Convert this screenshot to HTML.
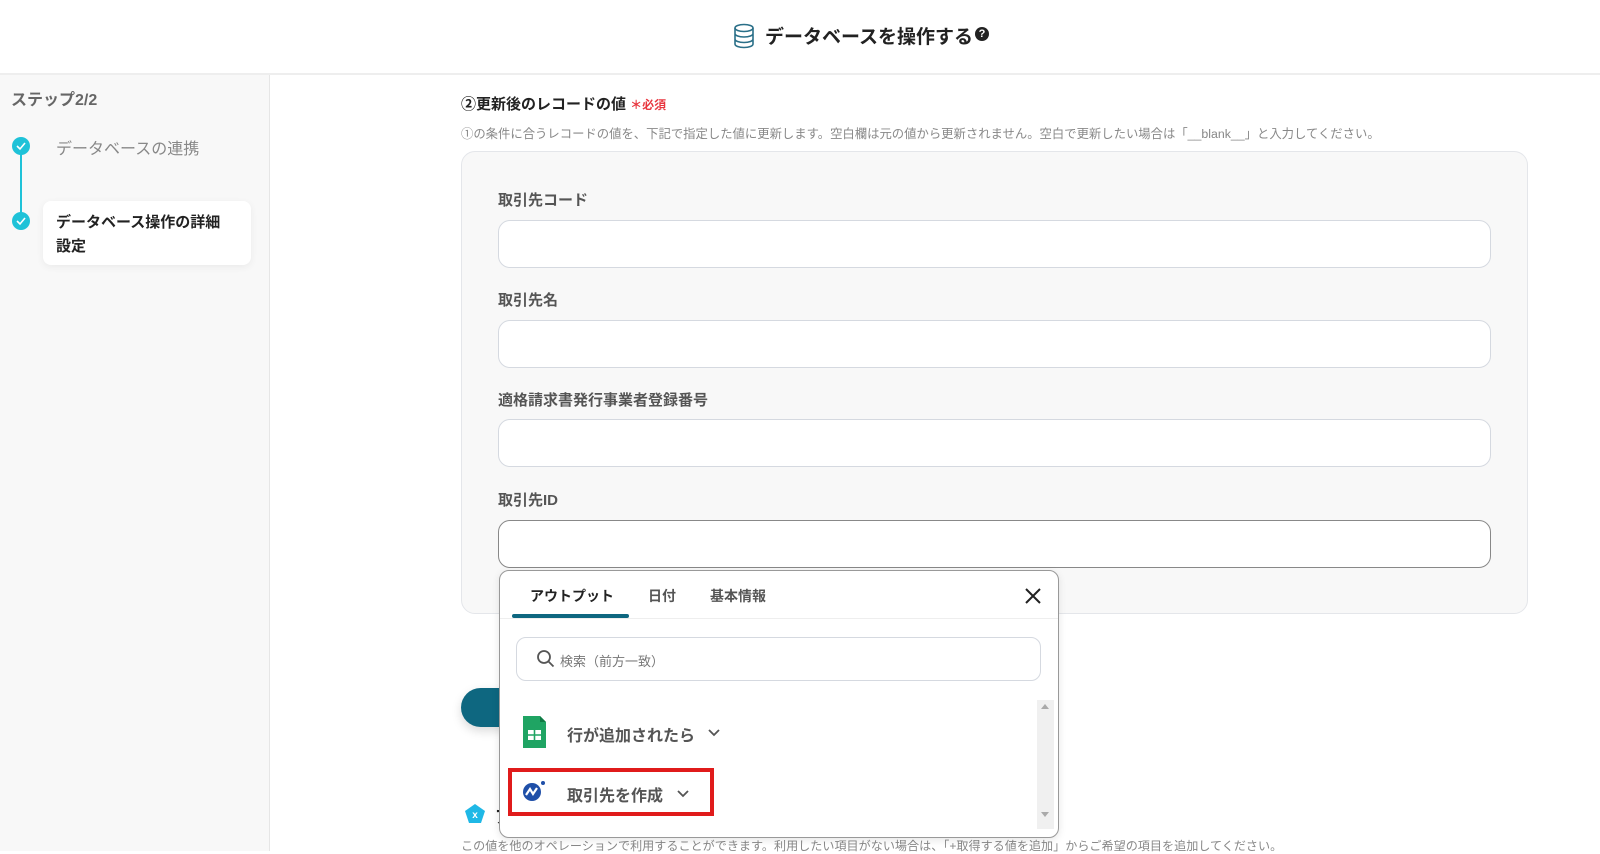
<!DOCTYPE html>
<html><head><meta charset="utf-8"><style>
*{box-sizing:border-box;margin:0;padding:0}
body{width:1600px;height:851px;overflow:hidden;background:#fff;font-family:"Liberation Sans","Noto Sans CJK JP",sans-serif;color:#333;position:relative}
.a{position:absolute}
.hdr{left:0;top:0;width:1600px;height:75px;border-bottom:2px solid #eee;background:#fff}
.side{left:0;top:75px;width:270px;height:776px;background:#f8f8f8;border-right:1px solid #e6e6e6}
.circ{width:18px;height:18px;border-radius:50%;background:#1fc2d8}
.inp{left:498px;width:993px;height:48px;border:1px solid #d5d9e0;border-radius:12px;background:#fff}
.lab{left:498px;font-size:15px;font-weight:bold;color:#555}
</style></head><body>
<div class="a hdr"></div>
<svg class="a" style="left:733px;top:23px" width="22" height="26" viewBox="0 0 22 26" fill="none" stroke="#2a6f88" stroke-width="1.6"><ellipse cx="11" cy="5" rx="9" ry="3.5"/><path d="M2 5v16c0 2 4 3.5 9 3.5s9-1.5 9-3.5V5M2 10.5c0 2 4 3.5 9 3.5s9-1.5 9-3.5M2 16c0 2 4 3.5 9 3.5s9-1.5 9-3.5"/></svg>
<div class="a" style="left:765px;top:22px;font-size:19px;font-weight:bold;color:#222">データベースを操作する</div>
<div class="a" style="left:975px;top:27px;width:14px;height:14px;border-radius:50%;background:#222;color:#fff;font-size:11px;font-weight:bold;text-align:center;line-height:14px">?</div>
<div class="a side"></div>
<div class="a" style="left:11px;top:86px;font-size:16px;font-weight:bold;color:#666">ステップ2/2</div>
<div class="a" style="left:20px;top:148px;width:2px;height:72px;background:#1fc2d8"></div>
<div class="a circ" style="left:12px;top:137px"></div>
<div class="a circ" style="left:12px;top:212px"></div>
<svg class="a" style="left:12px;top:137px" width="18" height="18"><path d="M5 9l3 3 5-6" stroke="#fff" stroke-width="1.6" fill="none"/></svg>
<svg class="a" style="left:12px;top:212px" width="18" height="18"><path d="M5 9l3 3 5-6" stroke="#fff" stroke-width="1.6" fill="none"/></svg>
<div class="a" style="left:56px;top:135px;font-size:16px;color:#888">データベースの連携</div>
<div class="a" style="left:43px;top:201px;width:208px;height:64px;background:#fff;border-radius:8px;box-shadow:0 2px 8px rgba(0,0,0,.06)"></div>
<div class="a" style="left:56px;top:211px;font-size:15px;font-weight:bold;color:#222;line-height:24px;width:190px">データベース操作の詳細<br>設定</div>
<div class="a" style="left:461px;top:93px;font-size:15px;font-weight:bold;color:#222">②更新後のレコードの値 <span style="color:#e8363f;font-size:12px">＊必須</span></div>
<div class="a" style="left:461px;top:124px;font-size:12.35px;color:#888;white-space:nowrap">①の条件に合うレコードの値を、下記で指定した値に更新します。空白欄は元の値から更新されません。空白で更新したい場合は「__blank__」と入力してください。</div>
<div class="a" style="left:461px;top:151px;width:1067px;height:463px;background:#f8f8f8;border:1px solid #e4e6ea;border-radius:14px"></div>
<div class="a lab" style="top:189px">取引先コード</div>
<div class="a inp" style="top:220px"></div>
<div class="a lab" style="top:289px">取引先名</div>
<div class="a inp" style="top:320px"></div>
<div class="a lab" style="top:389px">適格請求書発行事業者登録番号</div>
<div class="a inp" style="top:419px"></div>
<div class="a lab" style="top:489px">取引先ID</div>
<div class="a inp" style="top:520px;border-color:#888"></div>
<div class="a" style="left:461px;top:688px;width:80px;height:39px;background:#0e6780;border-radius:20px;box-shadow:0 4px 10px rgba(0,0,0,.15)"></div>
<svg class="a" style="left:464px;top:803px" width="22" height="22" viewBox="0 0 22 22"><path d="M11 1l10 7-4 12H5L1 8z" fill="#1fb8e6"/><text x="11" y="15" font-size="10" fill="#fff" text-anchor="middle" font-family="Liberation Sans" font-weight="bold">x</text></svg>
<div class="a" style="left:495px;top:803px;font-size:17px;font-weight:bold;color:#222">ア</div>
<div class="a" style="left:461px;top:837px;font-size:12.1px;color:#888;white-space:nowrap">この値を他のオペレーションで利用することができます。利用したい項目がない場合は、「+取得する値を追加」からご希望の項目を追加してください。</div>
<div class="a" style="left:499px;top:570px;width:560px;height:268px;background:#fff;border:1px solid #999;border-radius:10px;box-shadow:0 2px 8px rgba(0,0,0,.1)"></div>
<div class="a" style="left:530px;top:586px;font-size:14px;font-weight:bold;color:#222">アウトプット</div>
<div class="a" style="left:648px;top:586px;font-size:14px;font-weight:bold;color:#555">日付</div>
<div class="a" style="left:710px;top:586px;font-size:14px;font-weight:bold;color:#555">基本情報</div>
<div class="a" style="left:500px;top:618px;width:558px;height:1px;background:#eee"></div>
<div class="a" style="left:512px;top:614px;width:117px;height:4px;background:#0e6780;border-radius:2px"></div>
<svg class="a" style="left:1024px;top:587px" width="18" height="18"><path d="M2 2l14 14M16 2L2 16" stroke="#222" stroke-width="2"/></svg>
<div class="a" style="left:516px;top:637px;width:525px;height:44px;border:1px solid #d5d9e0;border-radius:10px"></div>
<svg class="a" style="left:536px;top:649px" width="20" height="20"><circle cx="8" cy="8" r="6" stroke="#555" stroke-width="1.8" fill="none"/><path d="M12.5 12.5l5 5" stroke="#555" stroke-width="1.8"/></svg>
<div class="a" style="left:560px;top:651px;font-size:13px;color:#777">検索（前方一致）</div>
<div class="a" style="left:1037px;top:700px;width:17px;height:129px;background:#f0f0f0"></div>
<div class="a" style="left:1041px;top:704px;border:4px solid transparent;border-bottom:5px solid #aaa;border-top:0"></div>
<div class="a" style="left:1041px;top:812px;border:4px solid transparent;border-top:5px solid #aaa;border-bottom:0"></div>
<svg class="a" style="left:522px;top:715px" width="25" height="34" viewBox="0 0 25 34"><path d="M1 1h17l6 6v26H1z" fill="#1fa463"/><path d="M18 1v6h6z" fill="#0f7a44"/><rect x="6" y="15" width="13" height="10" fill="#fff"/><path d="M6 20h13M12.5 15v10" stroke="#1fa463" stroke-width="1.6"/></svg>
<div class="a" style="left:567px;top:722px;font-size:16px;font-weight:bold;color:#555">行が追加されたら</div>
<svg class="a" style="left:707px;top:728px" width="14" height="10"><path d="M2 2l5 5 5-5" stroke="#555" stroke-width="1.8" fill="none"/></svg>
<div class="a" style="left:508px;top:768px;width:206px;height:48px;border:4px solid #e01b1b"></div>
<svg class="a" style="left:522px;top:780px" width="24" height="22" viewBox="0 0 24 22"><circle cx="10" cy="12" r="9" fill="#1f4fa8"/><path d="M4 15l4-6 3 5 4-6" stroke="#fff" stroke-width="2.2" fill="none"/><circle cx="21" cy="3" r="2" fill="#1f4fa8"/></svg>
<div class="a" style="left:567px;top:782px;font-size:16px;font-weight:bold;color:#555">取引先を作成</div>
<svg class="a" style="left:676px;top:789px" width="14" height="10"><path d="M2 2l5 5 5-5" stroke="#555" stroke-width="1.8" fill="none"/></svg>
</body></html>
